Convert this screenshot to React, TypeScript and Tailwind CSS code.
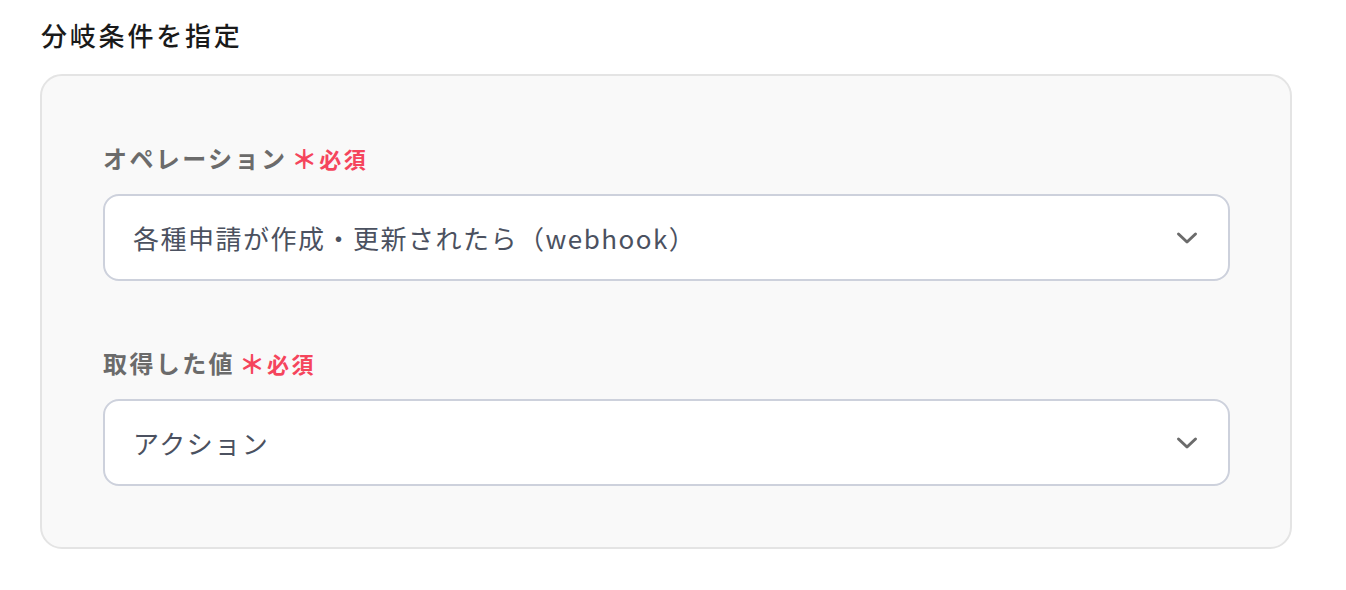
import React from "react";

const font = { fontFamily: '"Noto Sans CJK JP", "Noto Sans", sans-serif' };

function Chevron() {
  return (
    <svg width="22" height="14" viewBox="0 0 22 14" fill="none">
      <path d="M2.5 3 L11 11 L19.5 3" stroke="#6b6b6b" strokeWidth="3" strokeLinecap="round" strokeLinejoin="round" />
    </svg>
  );
}

function Field({ label, value }: { label: string; value: string }) {
  return (
    <div className="flex flex-col">
      <div className="flex items-center h-[36px]">
        <span className="text-[24px] font-bold text-[#6b6b6b] tracking-[2.4px] leading-[36px]">{label}</span>
        <span className="ml-[4px] text-[26px] font-bold text-[#f5455c] leading-[36px]">＊</span>
        <span className="ml-[2px] text-[22px] font-bold text-[#f5455c] tracking-[2.5px] leading-[36px]">必須</span>
      </div>
      <div className="mt-[18px] h-[87px] rounded-[16px] border-2 border-[#cdd1dc] bg-white flex items-center justify-between pl-[28px] pr-[30px]">
        <span className="text-[26px] text-[#4b5160] tracking-[1.5px]">{value}</span>
        <Chevron />
      </div>
    </div>
  );
}

export default function App() {
  return (
    <div className="w-[1346px] h-[590px] bg-white" style={font}>
      <div className="pl-[40px] pt-[16px] w-[1292px]">
        <h2 className="text-[26px] font-medium text-[#1a1a1a] tracking-[2.8px] leading-[38px] pl-[1px]">分岐条件を指定</h2>
        <div className="mt-[20px] rounded-[22px] border-2 border-[#e4e4e4] bg-[#f9f9f9] pt-[64px] pb-[61px] pl-[61px] pr-[60px] flex flex-col gap-[64px]">
          <Field label="オペレーション" value="各種申請が作成・更新されたら（webhook）" />
          <Field label="取得した値" value="アクション" />
        </div>
      </div>
    </div>
  );
}
